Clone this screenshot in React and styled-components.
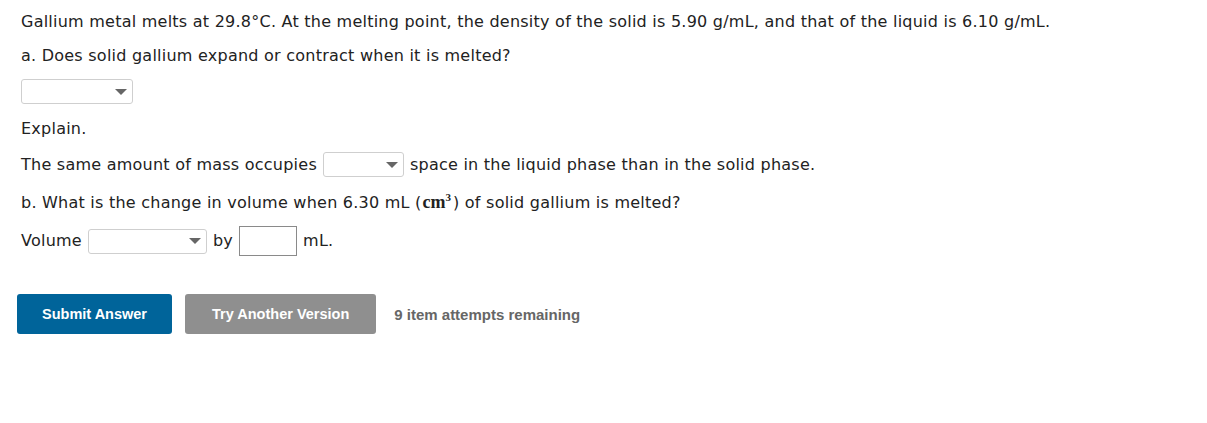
import React from "react";
import styled, { createGlobalStyle } from "styled-components";

const Global = createGlobalStyle`
  html, body { margin: 0; padding: 0; background: #fff; }
  body { font-family: "DejaVu Sans", Verdana, sans-serif; color: #222; }
`;

const Page = styled.div`
  padding: 12px 0 0 21px;
  width: 1207px;
  height: 423px;
  box-sizing: border-box;
  font-size: 16px;
  letter-spacing: 0.24px;
`;

const Line = styled.p`
  margin: ${(p) => p.$mt || 0}px 0 0 0;
  line-height: 20px;
  height: 20px;
  white-space: nowrap;
`;

const Row = styled.div`
  display: flex;
  align-items: center;
  gap: ${(p) => p.$gap || 6}px;
  margin-top: ${(p) => p.$mt || 0}px;
  line-height: 20px;
  white-space: nowrap;
`;

const Select = styled.div`
  width: ${(p) => p.$w}px;
  height: 25px;
  box-sizing: border-box;
  border: 1px solid #cfcfcf;
  border-radius: 3px;
  background: #fff;
  display: flex;
  align-items: center;
  justify-content: flex-end;
  padding-right: 5px;
  margin-top: ${(p) => p.$mt || 0}px;
`;

const Arrow = styled.span`
  width: 0;
  height: 0;
  border-left: 6px solid transparent;
  border-right: 6px solid transparent;
  border-top: 6px solid #666;
`;

const TextBox = styled.div`
  width: 58px;
  height: 30px;
  box-sizing: border-box;
  border: 1px solid #8a8a8a;
  background: #fff;
`;

const Math = styled.span`
  font-family: "Liberation Serif", "Times New Roman", serif;
  font-size: 18px;
  font-weight: bold;
  letter-spacing: 0;
  line-height: 0;
  padding: 0 2px 0 1px;
  sup { font-size: 11px; line-height: 0; }
`;

const Buttons = styled.div`
  display: flex;
  align-items: center;
  margin-top: 38px;
  margin-left: -4px;
  gap: 13px;
  letter-spacing: 0;
`;

const Button = styled.button`
  height: 40px;
  padding: 0 ${(p) => p.$px}px;
  border: none;
  border-radius: 3px;
  background: ${(p) => p.$bg};
  color: #fff;
  font-family: "Liberation Sans", Arial, sans-serif;
  font-weight: bold;
  font-size: 14.5px;
  cursor: pointer;
`;

const Attempts = styled.span`
  margin-left: 5px;
  font-family: "Liberation Sans", Arial, sans-serif;
  font-weight: bold;
  font-size: 15px;
  color: #666;
`;

export default function App() {
  return (
    <>
      <Global />
      <Page>
        <Line>
          Gallium metal melts at 29.8°C. At the melting point, the density of the solid is 5.90 g/mL, and that of the liquid is 6.10 g/mL.
        </Line>
        <Line $mt={14}>a. Does solid gallium expand or contract when it is melted?</Line>
        <Select $w={112} $mt={13}><Arrow /></Select>
        <Line $mt={15}>Explain.</Line>
        <Row $mt={13}>
          <span>The same amount of mass occupies</span>
          <Select $w={81}><Arrow /></Select>
          <span>space in the liquid phase than in the solid phase.</span>
        </Row>
        <Line $mt={16}>
          b. What is the change in volume when 6.30 mL (<Math>cm<sup>3</sup></Math>) of solid gallium is melted?
        </Line>
        <Row $mt={13}>
          <span>Volume</span>
          <Select $w={119}><Arrow /></Select>
          <span>by</span>
          <TextBox />
          <span>mL.</span>
        </Row>
        <Buttons>
          <Button $bg="#00649a" $px={25}>Submit Answer</Button>
          <Button $bg="#8f8f8f" $px={27}>Try Another Version</Button>
          <Attempts>9 item attempts remaining</Attempts>
        </Buttons>
      </Page>
    </>
  );
}
